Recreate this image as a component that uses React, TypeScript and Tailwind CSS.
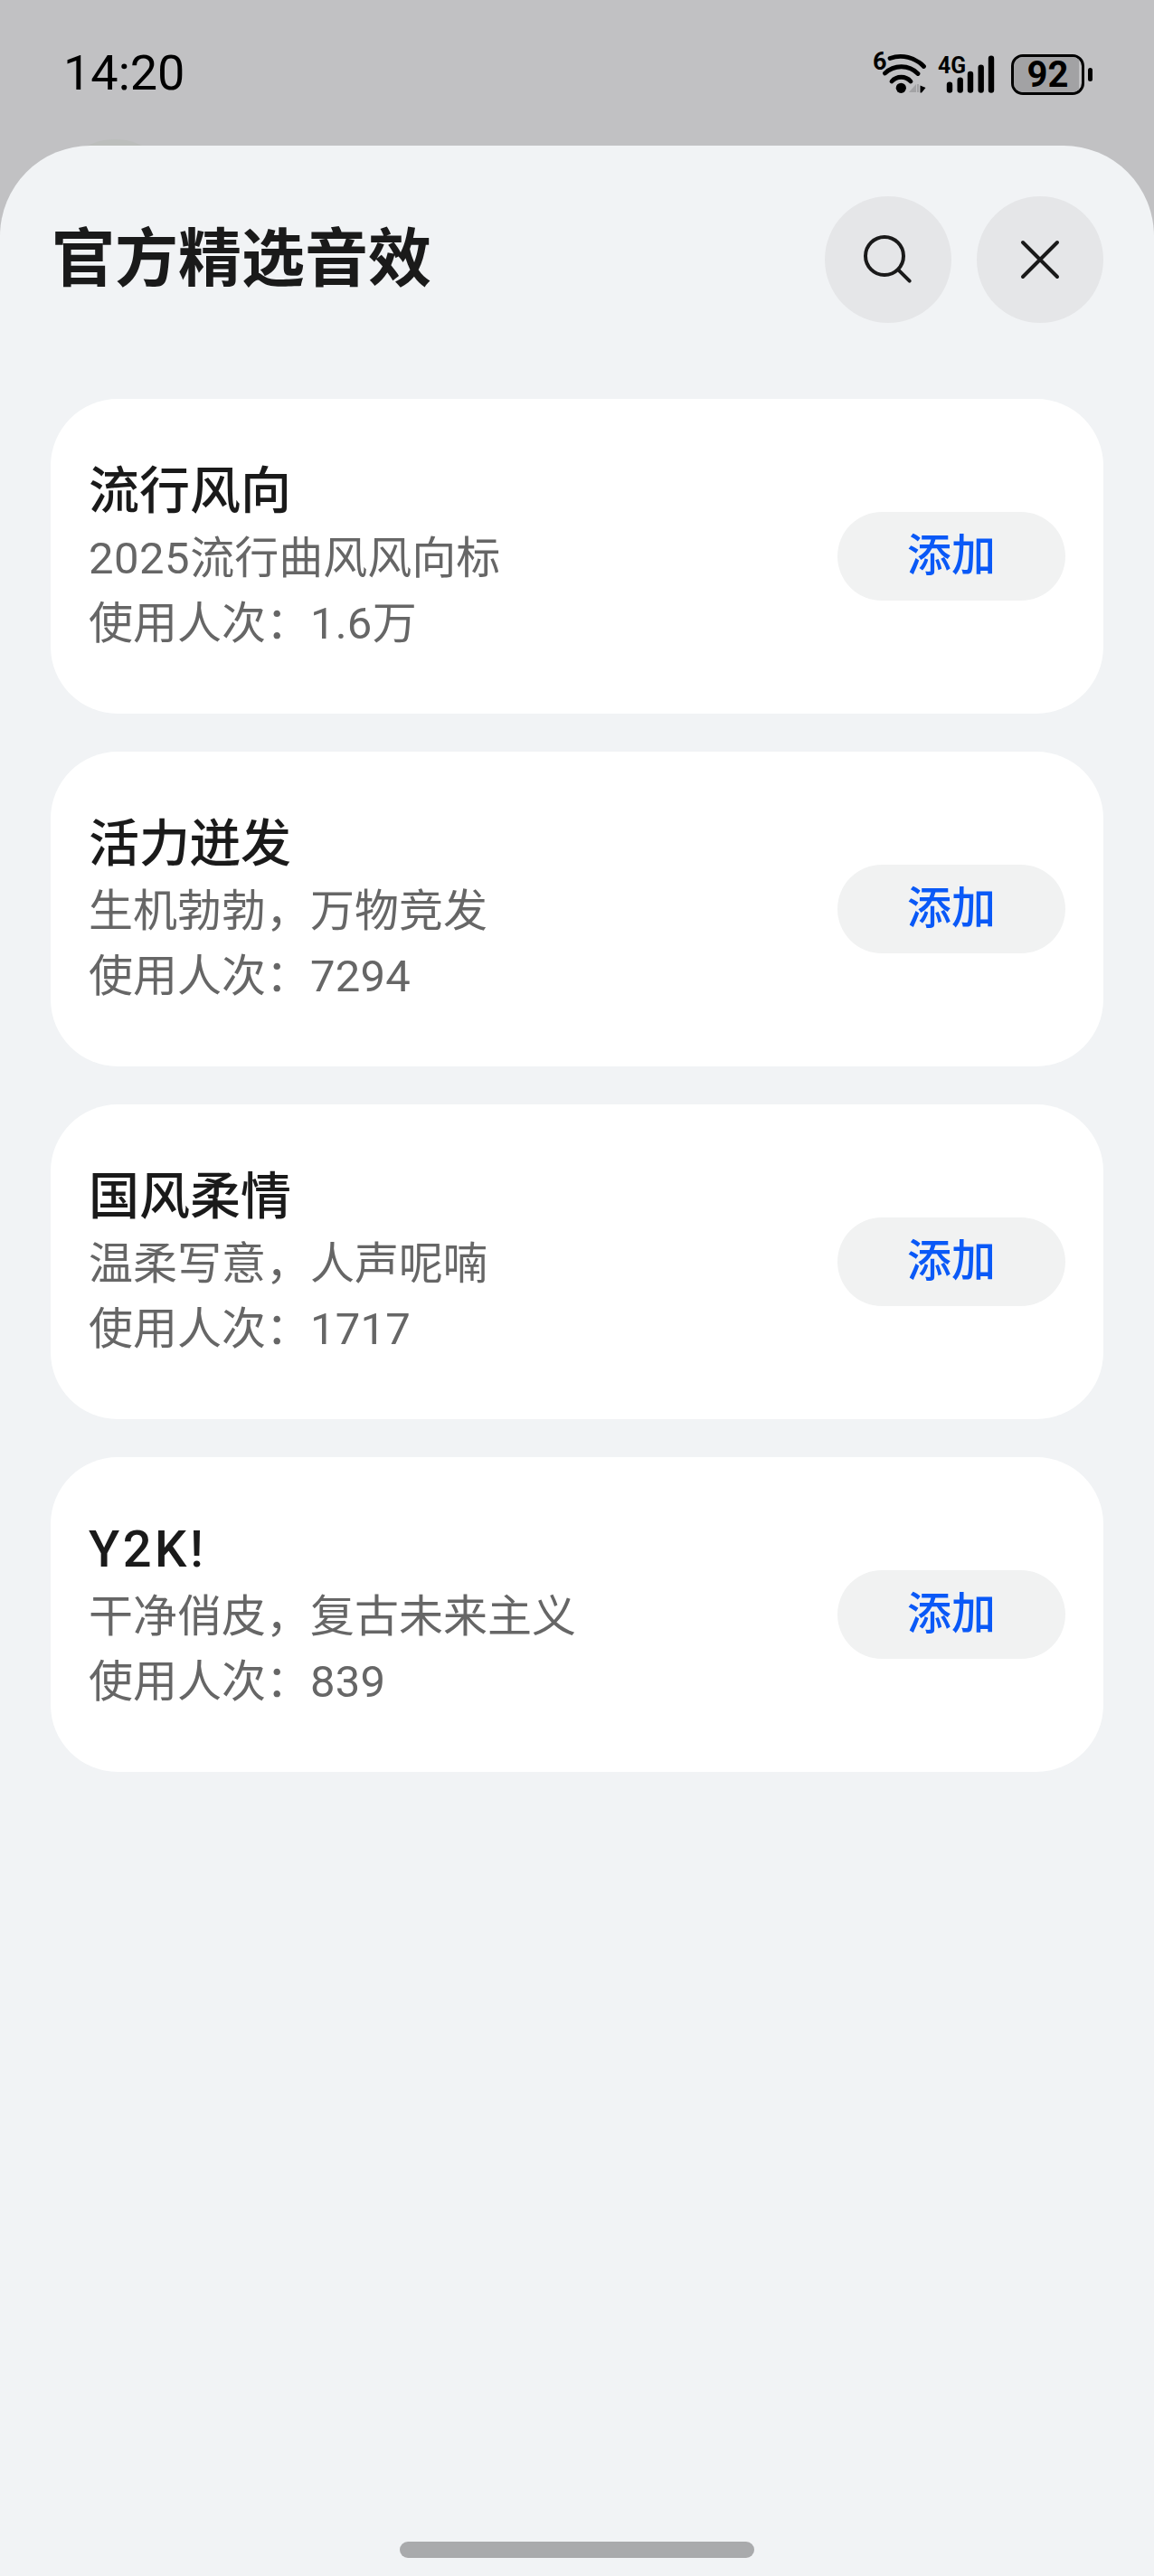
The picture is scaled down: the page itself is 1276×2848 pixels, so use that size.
const font = { fontFamily: '"Roboto", "Noto Sans CJK SC", sans-serif' };

const items = [
  { t: "流行风向", tc: "", s: <><span className="tracking-[0.5px]">2025</span>流行曲风风向标</>, n: "1.6", u: "万" },
  { t: "活力迸发", tc: "", s: "生机勃勃，万物竞发", n: "7294", u: "" },
  { t: "国风柔情", tc: "", s: "温柔写意，人声呢喃", n: "1717", u: "" },
  { t: "Y2K!", tc: "tracking-[3.5px]", s: "干净俏皮，复古未来主义", n: "839", u: "" },
];

function Wifi() {
  return (
    <svg width="66" height="58" viewBox="962 50 66 58" className="block">
      <text x="966" y="77" fontSize="27" fontWeight="700" fontFamily="Roboto, sans-serif" fill="#000">6</text>
      <path d="M985 64.5A35 35 0 0 1 1022.5 73.5" fill="none" stroke="#000" strokeWidth="4.8" strokeLinecap="round" />
      <path d="M979.5 81A26 26 0 0 1 1016 81.5" fill="none" stroke="#000" strokeWidth="4.8" strokeLinecap="round" />
      <path d="M987 90A14 14 0 0 1 1008 90" fill="none" stroke="#000" strokeWidth="4.8" strokeLinecap="round" />
      <circle cx="997.3" cy="97.3" r="5.6" fill="#000" />
      <path d="M1006 102L1014 93V102Z" fill="#a3a3a5" />
      <path d="M1016 93V102" stroke="#a3a3a5" strokeWidth="2" />
      <path d="M1018.5 94.5L1024.5 97L1020 102.5H1018.5Z" fill="#000" />
    </svg>
  );
}

function Signal() {
  const bars = [
    [1051, 90.7],
    [1062.7, 85.7],
    [1074, 79],
    [1085.7, 71.7],
    [1097, 61.7],
  ];
  return (
    <svg width="66" height="58" viewBox="1037 50 66 58" className="block">
      <text x="1038" y="81" fontSize="25" fontWeight="700" fontFamily="Roboto, sans-serif" textLength="31" lengthAdjust="spacingAndGlyphs" fill="#000">4G</text>
      {bars.map(([x, y]) => (
        <line key={x} x1={x} y1={y + 3} x2={x} y2={99.5} stroke="#000" strokeWidth="6.4" strokeLinecap="round" />
      ))}
    </svg>
  );
}

function Battery() {
  return (
    <div className="flex items-center gap-1">
      <div className="relative flex h-[45px] w-[81px] items-center justify-center overflow-hidden rounded-[13px] border-[3px] border-black">
        <div className="absolute inset-y-0 left-0 w-[72px] bg-[#a2a2a4]" />
        <span className="relative text-[40px] leading-none font-bold text-black" style={{ fontFamily: "Roboto, sans-serif" }}>92</span>
      </div>
      <div className="h-[15px] w-[5px] rounded-full bg-black" />
    </div>
  );
}

function RoundButton({ children }: { children: React.ReactNode }) {
  return (
    <button className="flex h-[140px] w-[140px] items-center justify-center rounded-full bg-[#e5e6e8]">
      {children}
    </button>
  );
}

export default function App() {
  return (
    <div className="flex h-[2848px] w-[1276px] flex-col overflow-hidden bg-[#c1c1c3]" style={font}>
      <div className="relative flex h-[161px] items-start justify-between pr-[68px] pl-[70px]">
        <div className="absolute top-[154px] left-[59px] h-[136px] w-[136px] rounded-full bg-[#bcbebc]" />
        <span className="mt-[54px] text-[54px] leading-[54px] font-normal text-black">14:20</span>
        <div className="mt-[50px] flex items-start">
          <Wifi />
          <div className="ml-[9px]"><Signal /></div>
          <div className="mt-[10px] ml-[16px]"><Battery /></div>
        </div>
      </div>

      <div className="relative z-10 flex flex-1 flex-col rounded-t-[100px] bg-[#f1f3f5]">
        <div className="flex items-center justify-between pt-[56px] pr-[56px] pl-[57px]">
          <h1 className="text-[70px] leading-[140px] font-bold text-[#1a1a1a]">官方精选音效</h1>
          <div className="flex gap-[28px]">
            <RoundButton>
              <svg width="60" height="60" viewBox="0 0 60 60" fill="none" stroke="#1a1a1a" strokeWidth="4" strokeLinecap="round">
                <circle cx="26" cy="26" r="21" />
                <path d="M41.3 41.3L53.7 53.7" />
              </svg>
            </RoundButton>
            <RoundButton>
              <svg width="46" height="46" viewBox="0 0 46 46" fill="none" stroke="#1a1a1a" strokeWidth="4" strokeLinecap="round">
                <path d="M4 4L42 42M42 4L4 42" />
              </svg>
            </RoundButton>
          </div>
        </div>

        <div className="mt-[84px] flex flex-col gap-[42px] px-[56px]">
          {items.map((it) => (
            <div key={it.t} className="flex h-[348px] items-center justify-between rounded-[74px] bg-white pr-[42px] pl-[42px]">
              <div className="flex flex-col">
                <div className={`text-[56px] leading-[78px] font-medium text-[#1a1a1a] ${it.tc}`}>{it.t}</div>
                <div className="text-[49px] leading-[72px] text-[#666666]">{it.s}</div>
                <div className="text-[49px] leading-[72px] text-[#666666]">
                  使用人次：<span className="tracking-[0.2px]">{it.n}</span>{it.u}
                </div>
              </div>
              <button className="flex h-[98px] w-[252px] items-center justify-center rounded-[49px] bg-[#f1f2f2] text-[49px] font-medium text-[#0a59f7]">
                添加
              </button>
            </div>
          ))}
        </div>

        <div className="mt-auto mb-[20px] flex justify-center">
          <div className="h-[18px] w-[392px] rounded-[9px] bg-[#a9aaac]" />
        </div>
      </div>
    </div>
  );
}
